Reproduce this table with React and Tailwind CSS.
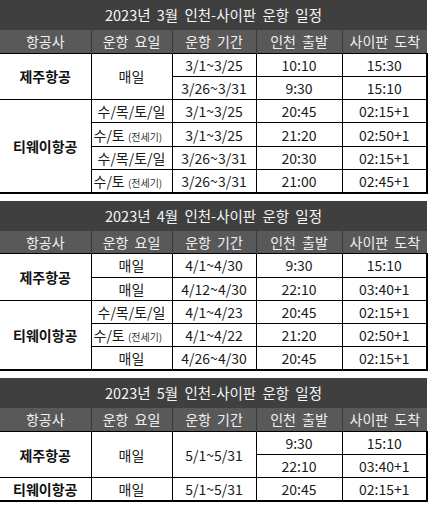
import React from "react";

const FONT = { fontFamily: '"Malgun Gothic", "Noto Sans CJK KR", "Noto Sans", sans-serif' };

function Small({ children }) {
  return <span className="text-[10px] text-[#333]">{children}</span>;
}

const td = "border border-black text-center align-middle p-0 text-[14px] text-[#1a1a1a] leading-none";
const tdLast = "border border-black border-r-2 text-center align-middle p-0 text-[14px] text-[#1a1a1a] leading-none";
const tdAir = "border border-black border-l-0 text-center align-middle p-0 text-[14px] font-bold text-[#111] leading-none";
const th = "bg-[#595959] text-[#f0f0f0] text-[14px] font-normal p-0 [word-spacing:3px]";

function Table({ month, children, className = "" }) {
  return (
    <table className={"w-[427px] table-fixed border-collapse " + className}>
      <colgroup>
        <col className="w-[91px]" />
        <col className="w-[81px]" />
        <col className="w-[84px]" />
        <col className="w-[86px]" />
        <col className="w-[85px]" />
      </colgroup>
      <thead>
        <tr className="h-[30px]">
          <th colSpan={5} className="bg-[#3f3f3f] text-[#f5f5f5] text-[14.5px] font-normal p-0 leading-none [word-spacing:3px]">
            {`2023년 ${month}월 인천-사이판 운항 일정`}
          </th>
        </tr>
        <tr className="h-[23px]">
          <th className={th + " border-r border-[#3a3a3a]"}>항공사</th>
          <th className={th + " border-r border-[#3a3a3a]"}>운항 요일</th>
          <th className={th + " border-r border-[#3a3a3a]"}>운항 기간</th>
          <th className={th + " border-r border-[#3a3a3a]"}>인천 출발</th>
          <th className={th}>사이판 도착</th>
        </tr>
      </thead>
      <tbody className="border-b-2 border-black">{children}</tbody>
    </table>
  );
}

export default function App() {
  return (
    <div className="w-[428px] h-[508px] bg-white overflow-hidden flex flex-col" style={FONT}>
      <Table month={3}>
        <tr className="h-[23.3px]">
          <td rowSpan={2} className={tdAir}>제주항공</td>
          <td rowSpan={2} className={td}>매일</td>
          <td className={td}>3/1~3/25</td>
          <td className={td}>10:10</td>
          <td className={tdLast}>15:30</td>
        </tr>
        <tr className="h-[23.3px]">
          <td className={td}>3/26~3/31</td>
          <td className={td}>9:30</td>
          <td className={tdLast}>15:10</td>
        </tr>
        <tr className="h-[23.3px]">
          <td rowSpan={4} className={tdAir}>티웨이항공</td>
          <td className={td}>수/목/토/일</td>
          <td className={td}>3/1~3/25</td>
          <td className={td}>20:45</td>
          <td className={tdLast}>02:15+1</td>
        </tr>
        <tr className="h-[23.3px]">
          <td className={td + " text-left pl-[2px]"}>수/토 <Small>(전세기)</Small></td>
          <td className={td}>3/1~3/25</td>
          <td className={td}>21:20</td>
          <td className={tdLast}>02:50+1</td>
        </tr>
        <tr className="h-[23.3px]">
          <td className={td}>수/목/토/일</td>
          <td className={td}>3/26~3/31</td>
          <td className={td}>20:30</td>
          <td className={tdLast}>02:15+1</td>
        </tr>
        <tr className="h-[23.3px]">
          <td className={td + " text-left pl-[2px]"}>수/토 <Small>(전세기)</Small></td>
          <td className={td}>3/26~3/31</td>
          <td className={td}>21:00</td>
          <td className={tdLast}>02:45+1</td>
        </tr>
      </Table>

      <Table month={4} className="mt-[7px]">
        <tr className="h-[23.3px]">
          <td rowSpan={2} className={tdAir}>제주항공</td>
          <td className={td}>매일</td>
          <td className={td}>4/1~4/30</td>
          <td className={td}>9:30</td>
          <td className={tdLast}>15:10</td>
        </tr>
        <tr className="h-[23.3px]">
          <td className={td}>매일</td>
          <td className={td}>4/12~4/30</td>
          <td className={td}>22:10</td>
          <td className={tdLast}>03:40+1</td>
        </tr>
        <tr className="h-[23.3px]">
          <td rowSpan={3} className={tdAir}>티웨이항공</td>
          <td className={td}>수/목/토/일</td>
          <td className={td}>4/1~4/23</td>
          <td className={td}>20:45</td>
          <td className={tdLast}>02:15+1</td>
        </tr>
        <tr className="h-[23.3px]">
          <td className={td + " text-left pl-[2px]"}>수/토 <Small>(전세기)</Small></td>
          <td className={td}>4/1~4/22</td>
          <td className={td}>21:20</td>
          <td className={tdLast}>02:50+1</td>
        </tr>
        <tr className="h-[23.3px]">
          <td className={td}>매일</td>
          <td className={td}>4/26~4/30</td>
          <td className={td}>20:45</td>
          <td className={tdLast}>02:15+1</td>
        </tr>
      </Table>

      <Table month={5} className="mt-[7px]">
        <tr className="h-[23.3px]">
          <td rowSpan={2} className={tdAir}>제주항공</td>
          <td rowSpan={2} className={td}>매일</td>
          <td rowSpan={2} className={td}>5/1~5/31</td>
          <td className={td}>9:30</td>
          <td className={tdLast}>15:10</td>
        </tr>
        <tr className="h-[23.3px]">
          <td className={td}>22:10</td>
          <td className={tdLast}>03:40+1</td>
        </tr>
        <tr className="h-[23.3px]">
          <td className={tdAir}>티웨이항공</td>
          <td className={td}>매일</td>
          <td className={td}>5/1~5/31</td>
          <td className={td}>20:45</td>
          <td className={tdLast}>02:15+1</td>
        </tr>
      </Table>
    </div>
  );
}
